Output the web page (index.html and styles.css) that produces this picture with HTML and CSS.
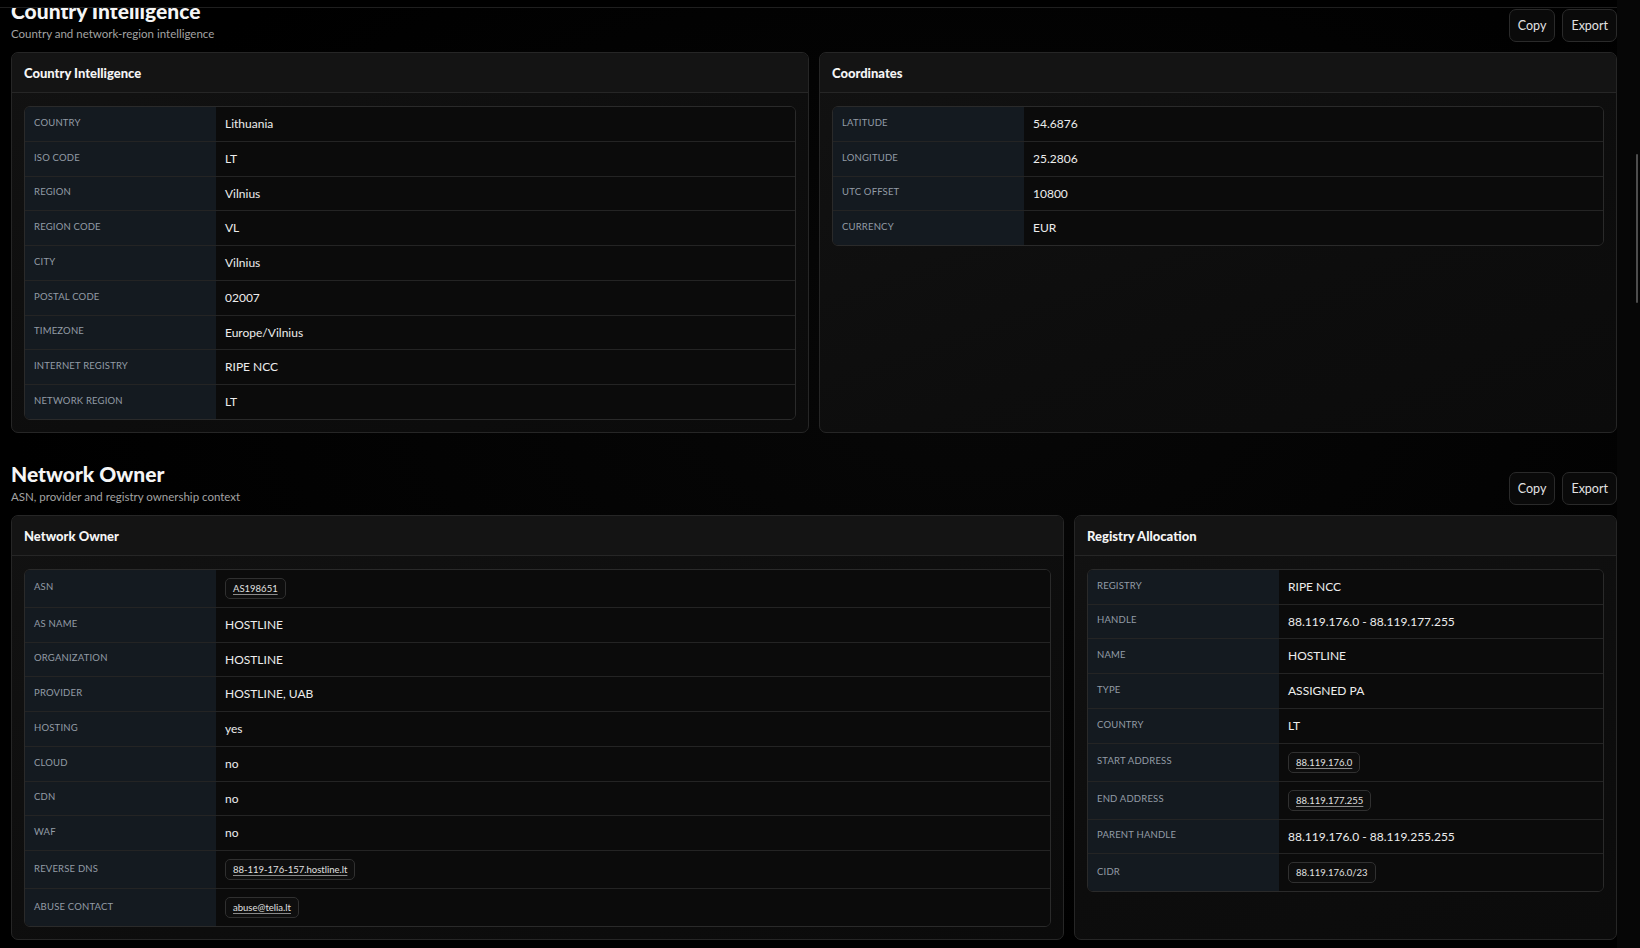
FILE: index.html
```html
<!DOCTYPE html>
<html lang="en">
<head>
    <meta charset="UTF-8">
    <meta name="viewport" content="width=device-width, initial-scale=1.0">
    <title>IP Lookup - Intelligence</title>
    <link rel="stylesheet" href="styles.css">
</head>
<body>

<div class="shell">
    <div class="main">
        <div class="topbar"></div>

        <div class="content">
            <!-- page is scrolled a little, first title sits under the top bar -->
            <div class="page">

                <section class="section">
                    <div class="section-head">
                        <div>
                            <h2>Country Intelligence</h2>
                            <p class="sub">Country and network-region intelligence</p>
                        </div>
                        <div class="actions">
                            <button class="btn">Copy</button>
                            <button class="btn">Export</button>
                        </div>
                    </div>

                    <div class="grid grid-half">
                        <div class="card">
                            <div class="card-head">Country Intelligence</div>
                            <div class="card-body">
                                <div class="kv">
                                    <div class="kv-row"><div class="kv-label">Country</div><div class="kv-value">Lithuania</div></div>
                                    <div class="kv-row"><div class="kv-label">ISO Code</div><div class="kv-value">LT</div></div>
                                    <div class="kv-row"><div class="kv-label">Region</div><div class="kv-value">Vilnius</div></div>
                                    <div class="kv-row"><div class="kv-label">Region Code</div><div class="kv-value">VL</div></div>
                                    <div class="kv-row"><div class="kv-label">City</div><div class="kv-value">Vilnius</div></div>
                                    <div class="kv-row"><div class="kv-label">Postal Code</div><div class="kv-value">02007</div></div>
                                    <div class="kv-row"><div class="kv-label">Timezone</div><div class="kv-value">Europe/Vilnius</div></div>
                                    <div class="kv-row"><div class="kv-label">Internet Registry</div><div class="kv-value">RIPE NCC</div></div>
                                    <div class="kv-row"><div class="kv-label">Network Region</div><div class="kv-value">LT</div></div>
                                </div>
                            </div>
                        </div>

                        <div class="card">
                            <div class="card-head">Coordinates</div>
                            <div class="card-body">
                                <div class="kv">
                                    <div class="kv-row"><div class="kv-label">Latitude</div><div class="kv-value">54.6876</div></div>
                                    <div class="kv-row"><div class="kv-label">Longitude</div><div class="kv-value">25.2806</div></div>
                                    <div class="kv-row"><div class="kv-label">UTC Offset</div><div class="kv-value">10800</div></div>
                                    <div class="kv-row"><div class="kv-label">Currency</div><div class="kv-value">EUR</div></div>
                                </div>
                            </div>
                        </div>
                    </div>
                </section>

                <section class="section">
                    <div class="section-head">
                        <div>
                            <h2>Network Owner</h2>
                            <p class="sub">ASN, provider and registry ownership context</p>
                        </div>
                        <div class="actions">
                            <button class="btn">Copy</button>
                            <button class="btn">Export</button>
                        </div>
                    </div>

                    <div class="grid grid-wide">
                        <div class="card">
                            <div class="card-head">Network Owner</div>
                            <div class="card-body">
                                <div class="kv">
                                    <div class="kv-row"><div class="kv-label">ASN</div><div class="kv-value"><span class="chip">AS198651</span></div></div>
                                    <div class="kv-row"><div class="kv-label">AS Name</div><div class="kv-value">HOSTLINE</div></div>
                                    <div class="kv-row"><div class="kv-label">Organization</div><div class="kv-value">HOSTLINE</div></div>
                                    <div class="kv-row"><div class="kv-label">Provider</div><div class="kv-value">HOSTLINE, UAB</div></div>
                                    <div class="kv-row"><div class="kv-label">Hosting</div><div class="kv-value">yes</div></div>
                                    <div class="kv-row"><div class="kv-label">Cloud</div><div class="kv-value">no</div></div>
                                    <div class="kv-row"><div class="kv-label">CDN</div><div class="kv-value">no</div></div>
                                    <div class="kv-row"><div class="kv-label">WAF</div><div class="kv-value">no</div></div>
                                    <div class="kv-row"><div class="kv-label">Reverse DNS</div><div class="kv-value"><span class="chip">88-119-176-157.hostline.lt</span></div></div>
                                    <div class="kv-row"><div class="kv-label">Abuse Contact</div><div class="kv-value"><span class="chip">abuse@telia.lt</span></div></div>
                                </div>
                            </div>
                        </div>

                        <div class="card">
                            <div class="card-head">Registry Allocation</div>
                            <div class="card-body">
                                <div class="kv">
                                    <div class="kv-row"><div class="kv-label">Registry</div><div class="kv-value">RIPE NCC</div></div>
                                    <div class="kv-row"><div class="kv-label">Handle</div><div class="kv-value">88.119.176.0 - 88.119.177.255</div></div>
                                    <div class="kv-row"><div class="kv-label">Name</div><div class="kv-value">HOSTLINE</div></div>
                                    <div class="kv-row"><div class="kv-label">Type</div><div class="kv-value">ASSIGNED PA</div></div>
                                    <div class="kv-row"><div class="kv-label">Country</div><div class="kv-value">LT</div></div>
                                    <div class="kv-row"><div class="kv-label">Start Address</div><div class="kv-value"><span class="chip">88.119.176.0</span></div></div>
                                    <div class="kv-row"><div class="kv-label">End Address</div><div class="kv-value"><span class="chip">88.119.177.255</span></div></div>
                                    <div class="kv-row"><div class="kv-label">Parent Handle</div><div class="kv-value">88.119.176.0 - 88.119.255.255</div></div>
                                    <div class="kv-row"><div class="kv-label">CIDR</div><div class="kv-value"><span class="chip plain">88.119.176.0/23</span></div></div>
                                </div>
                            </div>
                        </div>
                    </div>
                </section>

            </div>
        </div>
    </div>

    <div class="rail"><div class="thumb"></div></div>
</div>

</body>
</html>
```

FILE: styles.css
```css
* {
    box-sizing: border-box;
}
html, body {
    margin: 0;
    height: 100%;
}
body {
    font-family: Lato, "Noto Sans", sans-serif;
    background: #000;
    color: #e8e8e8;
    overflow: hidden;
}
.shell {
    display: flex;
    height: 100vh;
}
.main {
    flex: 1;
    min-width: 0;
    display: flex;
    flex-direction: column;
}
.topbar {
    height: 8px;
    flex-shrink: 0;
    border-bottom: 1px solid #1f1f1f;
}
.content {
    flex: 1;
    overflow: hidden;
    background: radial-gradient(ellipse at 60% 40%, #070707 0%, #000 70%);
}
.page {
    margin-top: -10px;
    padding-left: 11px;
}
.rail {
    width: 23px;
    flex-shrink: 0;
    background: #060606;
}
.thumb {
    width: 2px;
    height: 149px;
    margin: 154px 0 0 19px;
    background: #4d4d4d;
    border-radius: 1px;
}

/* sections */
.section + .section {
    margin-top: 28px;
}
.section-head {
    display: flex;
    justify-content: space-between;
    align-items: flex-end;
    margin-bottom: 10px;
}
.section-head h2 {
    margin: 0;
    font-size: 21px;
    line-height: 26px;
    font-weight: 900;
    color: #f5f5f5;
}
.sub {
    margin: 2px 0 0;
    font-size: 11.5px;
    line-height: 16px;
    color: #a3a3a3;
}
.actions {
    display: flex;
    gap: 7px;
}
.btn {
    height: 33px;
    padding: 0 8px;
    font-family: inherit;
    font-size: 12.5px;
    color: #e2e2e2;
    background: #0a0a0a;
    border: 1px solid #2a2a2a;
    border-radius: 7px;
    cursor: pointer;
}
.btn:hover {
    background: #151515;
}

/* grids */
.grid {
    display: grid;
    gap: 10px;
}
.grid-half {
    grid-template-columns: 1fr 1fr;
}
.grid-wide {
    grid-template-columns: minmax(0, 1fr) 543px;
}

/* cards */
.card {
    border: 1px solid #262626;
    border-radius: 7px;
    background: linear-gradient(160deg, #121212 0%, #0d0d0d 60%, #0b0b0b 100%);
    overflow: hidden;
}
.card-head {
    padding: 12px 12px 11px;
    font-size: 13px;
    line-height: 16px;
    font-weight: 900;
    color: #f5f5f5;
    background: #141414;
    border-bottom: 1px solid #262626;
}
.card-body {
    padding: 13px 12px 12px;
}

/* key / value table */
.kv {
    border: 1px solid #2a2a2a;
    border-radius: 6px;
    overflow: hidden;
}
.kv-row {
    display: flex;
    border-bottom: 1px solid #242424;
}
.kv-row:last-child {
    border-bottom: none;
}
.kv-label {
    width: 191px;
    flex-shrink: 0;
    display: flex;
    align-items: center;
    padding: 0 9px 3px;
    font-size: 9.5px;
    letter-spacing: 0.02em;
    text-transform: uppercase;
    color: #939ca6;
    background: #141a20;
}
.kv-value {
    flex: 1;
    display: flex;
    align-items: center;
    padding: 8px 9px;
    font-size: 12px;
    line-height: 17.75px;
    color: #ededed;
    background: #0b0b0b;
}
.chip {
    display: inline-block;
    padding: 3px 7px;
    font-size: 9.5px;
    line-height: 13px;
    color: #e0e0e0;
    background: #0e0e0e;
    border: 1px solid #303030;
    border-radius: 5px;
    text-decoration: underline;
    text-decoration-color: #8a8a8a;
    text-underline-offset: 2px;
}
.chip.plain {
    text-decoration: none;
}
```
